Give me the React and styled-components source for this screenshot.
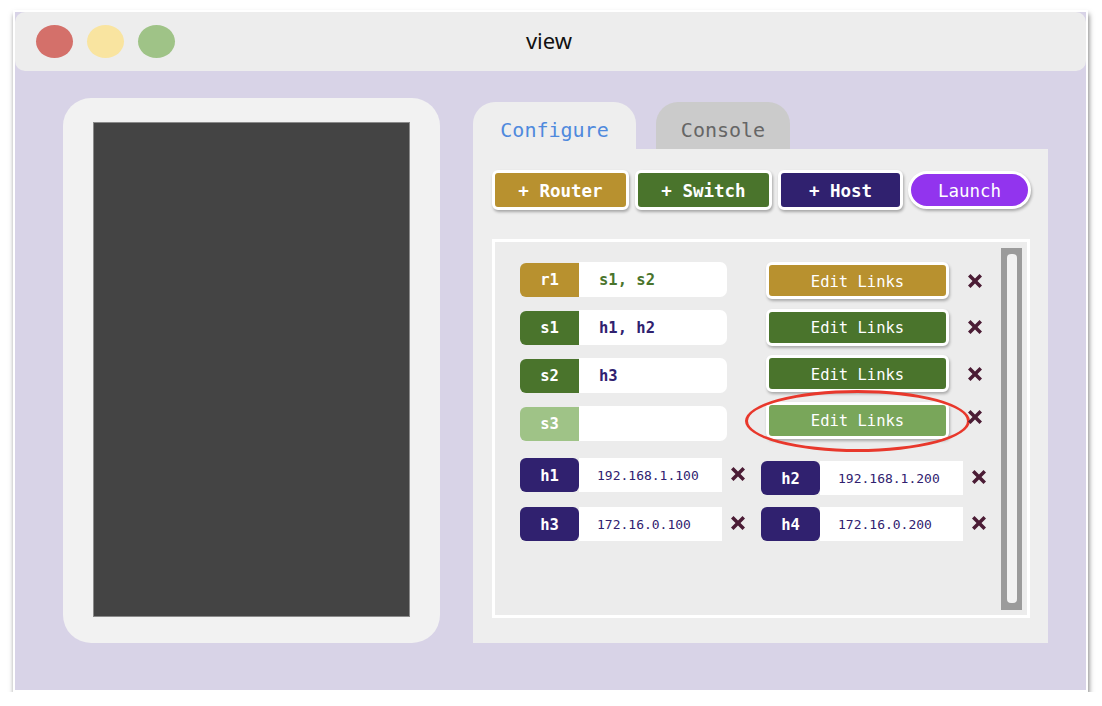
import React from "react";
import styled, { createGlobalStyle } from "styled-components";

const GlobalStyle = createGlobalStyle`
  body {
    margin: 0;
    background: #ffffff;
  }
  * {
    box-sizing: border-box;
  }
`;

const MONO = `"DejaVu Sans Mono", "Liberation Mono", monospace`;

const colors = {
  router: "#b8912f",
  switch: "#4a742c",
  switchOff: "#9fc387",
  switchEdit: "#79a65a",
  host: "#30216f",
  launch: "#9234ee",
  cross: "#4b1c35",
};

const Frame = styled.div`
  margin: 10px 0 0 13px;
  width: 1075px;
  height: 682px;
  border: 2px solid #ffffff;
  background: #d8d3e7;
  box-shadow: 1px 4px 5px rgba(0, 0, 0, 0.5);
  display: flex;
  flex-direction: column;
`;

const TitleBar = styled.div`
  height: 59px;
  background: #ededed;
  border-radius: 10px;
  display: grid;
  grid-template-columns: 1fr auto 1fr;
  align-items: center;
  padding-left: 21px;
`;

const Dots = styled.div`
  display: flex;
  gap: 14px;
`;

const Dot = styled.span`
  width: 37px;
  height: 33px;
  border-radius: 50%;
  background: ${(p) => p.$color};
`;

const Title = styled.div`
  font-family: "Noto Sans", "Open Sans", sans-serif;
  font-size: 22px;
  color: #111111;
  padding-right: 24px;
  margin-top: -3px;
`;

const Main = styled.div`
  display: flex;
  gap: 33px;
  padding: 27px 0 0 48px;
`;

const DevicePanel = styled.div`
  width: 377px;
  height: 545px;
  background: #f2f2f2;
  border-radius: 28px;
  padding: 24px 30px 26px;
`;

const Screen = styled.div`
  width: 100%;
  height: 100%;
  background: #444444;
  border: 1px solid #8a8a8a;
`;

const RightSide = styled.div`
  width: 575px;
  display: flex;
  flex-direction: column;
`;

const Tabs = styled.div`
  display: flex;
  gap: 20px;
  margin-top: 4px;
`;

const Tab = styled.div`
  width: ${(p) => p.$width}px;
  height: 47px;
  border-radius: 22px 22px 0 0;
  background: ${(p) => (p.$active ? "#eeeeee" : "#cbcbcb")};
  color: ${(p) => (p.$active ? "#4f89dd" : "#666666")};
  font-family: ${MONO};
  font-size: 20px;
  display: flex;
  align-items: center;
  justify-content: center;
  padding-top: 9px;
`;

const Panel = styled.div`
  height: 494px;
  background: #eeeeee;
  padding: 21px 17px 0 19px;
`;

const Toolbar = styled.div`
  display: flex;
  align-items: center;
  gap: 6px;
`;

const AddButton = styled.div`
  width: ${(p) => p.$width}px;
  height: 40px;
  border: 3px solid #ffffff;
  border-radius: 6px;
  background: ${(p) => p.$color};
  color: #ffffff;
  font-family: ${MONO};
  font-weight: bold;
  font-size: 17.5px;
  display: flex;
  align-items: center;
  justify-content: center;
  padding-top: 2px;
  box-shadow: 1px 2px 3px rgba(0, 0, 0, 0.3);
`;

const LaunchButton = styled.div`
  width: 123px;
  height: 38px;
  margin-left: -1px;
  border: 3px solid #ffffff;
  border-radius: 20px;
  background: ${colors.launch};
  color: #ffffff;
  font-family: ${MONO};
  font-size: 17.5px;
  display: flex;
  align-items: center;
  justify-content: center;
  padding-top: 2px;
  box-shadow: 1px 2px 3px rgba(0, 0, 0, 0.3);
`;

const ListBox = styled.div`
  margin-top: 29px;
  width: 538px;
  height: 379px;
  border: 3px solid #ffffff;
  background: #ececec;
  display: flex;
`;

const ListContent = styled.div`
  flex: 1;
  padding: 20px 0 0 25px;
`;

const ScrollTrack = styled.div`
  width: 21px;
  margin: 6px 5px 5px 0;
  background: #9b9b9b;
  padding: 6px 5px 7px 6px;
`;

const ScrollThumb = styled.div`
  height: 100%;
  background: #f2f2f2;
  border-radius: 4px;
`;

const NodesArea = styled.div`
  display: flex;
  gap: 39px;
`;

const NodeList = styled.div`
  display: flex;
  flex-direction: column;
  gap: 13px;
`;

const NodeRow = styled.div`
  display: flex;
  align-items: center;
`;

const Tag = styled.div`
  width: ${(p) => p.$width || 59}px;
  height: 34px;
  border-radius: 6px 0 0 6px;
  background: ${(p) => p.$color};
  color: #ffffff;
  font-family: ${MONO};
  font-weight: bold;
  font-size: 15.5px;
  display: flex;
  align-items: center;
  justify-content: center;
  padding-top: 1px;
`;

const LinkField = styled.div`
  width: 148px;
  height: 35px;
  background: #ffffff;
  border-radius: 0 7px 7px 0;
  padding-left: 20px;
  display: flex;
  align-items: center;
  font-family: ${MONO};
  font-weight: bold;
  font-size: 15.5px;
  color: ${(p) => p.$color};
`;

const ActionList = styled.div`
  display: flex;
  flex-direction: column;
  gap: 9.5px;
`;

const ActionRow = styled.div`
  position: relative;
  display: flex;
  align-items: center;
  gap: 18px;
`;

const EditButton = styled.div`
  width: 183px;
  height: 37px;
  border: 3px solid #ffffff;
  border-radius: 6px;
  background: ${(p) => p.$color};
  color: #ffffff;
  font-family: ${MONO};
  font-size: 15.5px;
  display: flex;
  align-items: center;
  justify-content: center;
  padding-top: 2px;
  box-shadow: 1px 2px 3px rgba(0, 0, 0, 0.28);
`;

const Highlight = styled.div`
  position: absolute;
  left: -21px;
  top: -12px;
  width: 225px;
  height: 62px;
  border: 3px solid #e8382c;
  border-radius: 50%;
  pointer-events: none;
`;

const HostGrid = styled.div`
  margin-top: 17px;
  display: grid;
  grid-template-columns: auto auto;
  justify-content: start;
  column-gap: 15px;
  row-gap: 12px;
`;

const HostCell = styled.div`
  display: flex;
  align-items: center;
  align-self: start;
  margin-top: ${(p) => (p.$drop ? 3 : 0)}px;
`;

const HostTag = styled(Tag)`
  border-radius: 6px;
`;

const AddressField = styled.div`
  width: 143px;
  height: 34px;
  background: #ffffff;
  padding-left: 18px;
  display: flex;
  align-items: center;
  font-family: ${MONO};
  font-size: 13px;
  color: ${colors.host};
`;

const CrossWrap = styled.span`
  position: relative;
  display: flex;
  margin-left: ${(p) => p.$gap || 0}px;
  margin-top: ${(p) => p.$lift || 0}px;
`;

const Cross = ({ gap, lift }) => (
  <CrossWrap $gap={gap} $lift={lift}>
    <svg width="16" height="16" viewBox="0 0 16 16">
      <path
        d="M1 3.5 L3.5 1 L8 5.5 L12.5 1 L15 3.5 L10.5 8 L15 12.5 L12.5 15 L8 10.5 L3.5 15 L1 12.5 L5.5 8 Z"
        fill={colors.cross}
      />
    </svg>
  </CrossWrap>
);

const nodes = [
  { name: "r1", color: colors.router, links: "s1, s2", linkColor: colors.switch, edit: colors.router },
  { name: "s1", color: colors.switch, links: "h1, h2", linkColor: colors.host, edit: colors.switch },
  { name: "s2", color: colors.switch, links: "h3", linkColor: colors.host, edit: colors.switch },
  { name: "s3", color: colors.switchOff, links: "", linkColor: colors.host, edit: colors.switchEdit, marked: true },
];

const hosts = [
  { name: "h1", ip: "192.168.1.100" },
  { name: "h2", ip: "192.168.1.200", drop: true },
  { name: "h3", ip: "172.16.0.100" },
  { name: "h4", ip: "172.16.0.200" },
];

export default function App() {
  return (
    <>
      <GlobalStyle />
      <Frame>
        <TitleBar>
          <Dots>
            <Dot $color="#d4706a" />
            <Dot $color="#f9e4a0" />
            <Dot $color="#9fc387" />
          </Dots>
          <Title>view</Title>
          <span />
        </TitleBar>
        <Main>
          <DevicePanel>
            <Screen />
          </DevicePanel>
          <RightSide>
            <Tabs>
              <Tab $active $width={163}>Configure</Tab>
              <Tab $width={134}>Console</Tab>
            </Tabs>
            <Panel>
              <Toolbar>
                <AddButton $width={137} $color={colors.router}>+ Router</AddButton>
                <AddButton $width={137} $color={colors.switch}>+ Switch</AddButton>
                <AddButton $width={125} $color={colors.host}>+ Host</AddButton>
                <LaunchButton>Launch</LaunchButton>
              </Toolbar>
              <ListBox>
                <ListContent>
                  <NodesArea>
                    <NodeList>
                      {nodes.map((n) => (
                        <NodeRow key={n.name}>
                          <Tag $color={n.color}>{n.name}</Tag>
                          <LinkField $color={n.linkColor}>{n.links}</LinkField>
                        </NodeRow>
                      ))}
                    </NodeList>
                    <ActionList>
                      {nodes.map((n) => (
                        <ActionRow key={n.name}>
                          <EditButton $color={n.edit}>Edit Links</EditButton>
                          {n.marked && <Highlight />}
                          <Cross lift={n.marked ? -6 : 0} />
                        </ActionRow>
                      ))}
                    </ActionList>
                  </NodesArea>
                  <HostGrid>
                    {hosts.map((h) => (
                      <HostCell key={h.name} $drop={h.drop}>
                        <HostTag $color={colors.host}>{h.name}</HostTag>
                        <AddressField>{h.ip}</AddressField>
                        <Cross gap={8} lift={-3} />
                      </HostCell>
                    ))}
                  </HostGrid>
                </ListContent>
                <ScrollTrack>
                  <ScrollThumb />
                </ScrollTrack>
              </ListBox>
            </Panel>
          </RightSide>
        </Main>
      </Frame>
    </>
  );
}
